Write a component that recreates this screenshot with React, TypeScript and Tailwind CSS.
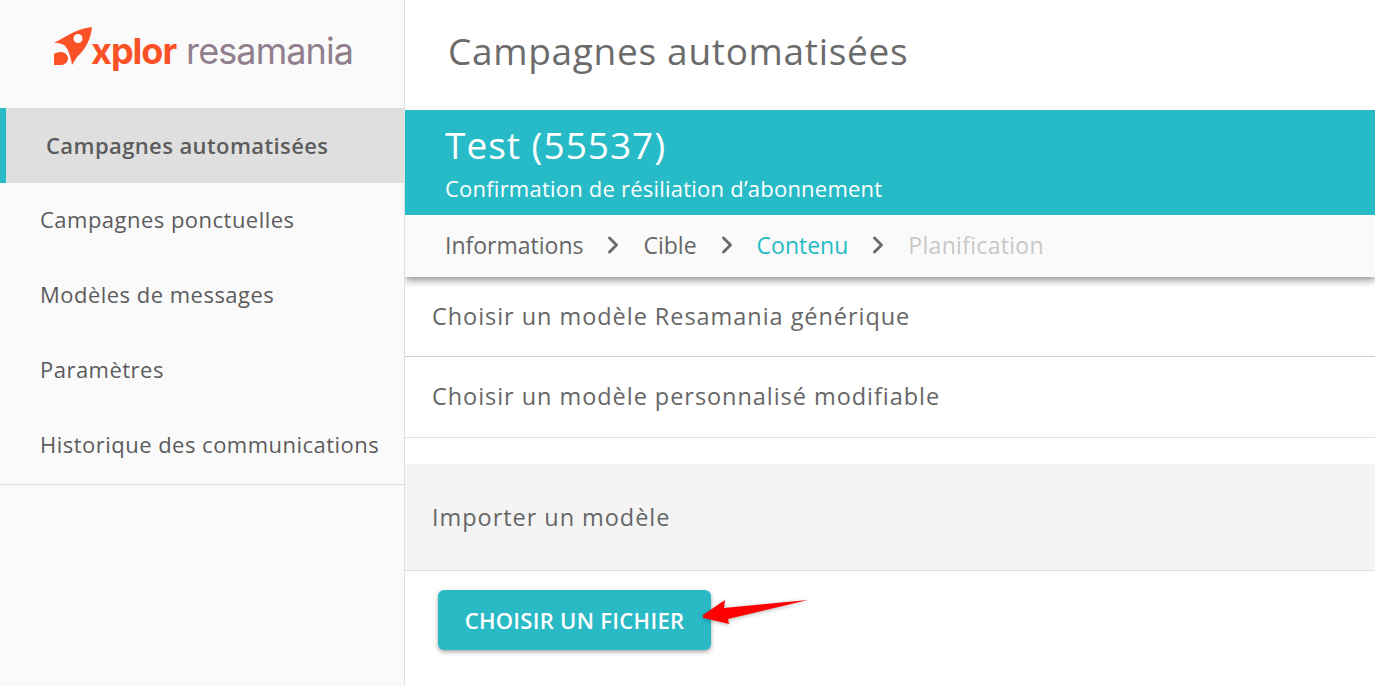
import React from 'react';
import { ChevronRight } from 'lucide-react';

const font = { fontFamily: '"Open Sans", "Noto Sans", sans-serif' };

const navItems = ['Campagnes ponctuelles', 'Modèles de messages', 'Paramètres', 'Historique des communications'];

const Logo = () => (
    <div className="h-[108px] flex items-start pl-[54px] pt-[27px]">
        <svg width="38" height="38" viewBox="0 0 38 38" className="shrink-0">
            <path fill="#fa5127" d="M38 0 C30 1 24 3 18 6 L0 16 C5 16 9 17 10 18 C14 21 17 30 18 38 L23 30 C32 22 37 11 38 0 Z" />
            <circle cx="24" cy="11.500" r="4.500" fill="#fafafa" />
            <path fill="#fa5127" d="M0 27 C1 26 4 25 7 25 C11 25 14 28 14 31.500 C14 35 11 38 7 38 H0 Z" />
        </svg>
        <div className="mt-[4px] -ml-[1px] flex items-baseline h-[40px] text-[36px] leading-[40px] tracking-[-0.9px]" style={{ fontFamily: 'Inter, sans-serif' }}>
            <span className="font-bold text-[#fa5127] tracking-[-1px]">xplor</span>
            <span className="ml-[10px] font-normal text-[#917f8e]">resamania</span>
        </div>
    </div>
);

const App = () => {
    return (
        <div className="flex h-[686px] w-[1375px] overflow-hidden bg-white text-[#666]" style={font}>
            <aside className="w-[405px] shrink-0 bg-[#fafafa] border-r border-[#e0e0e0]">
                <Logo />
                <div className="h-[75px] flex items-center bg-[#dfdfdf] border-l-[6px] border-[#26bbc6] pl-[40px] pb-[1px] text-[22px] font-semibold text-[#5c5c5c] tracking-[0.4px]">
                    Campagnes automatisées
                </div>
                <nav className="border-b border-[#dcdcdc] h-[302px]">
                    {navItems.map(item => (
                        <div key={item} className="h-[75px] flex items-center pl-[40px] pb-[2px] text-[22px] text-[#5c5c5c] tracking-[0.48px]">
                            {item}
                        </div>
                    ))}
                </nav>
            </aside>
            <main className="flex-1 min-w-0 overflow-hidden">
                <h1 className="h-[110px] flex items-center pl-[43px] pb-[8px] text-[37px] font-normal text-[#6b6b6b] tracking-[0.7px]">
                    Campagnes automatisées
                </h1>
                <div className="relative z-10 h-[105px] bg-[#26bbc6] text-white pl-[40px] pt-[11px]">
                    <div className="text-[37px] leading-[48px] tracking-[1px]">Test (55537)</div>
                    <div className="text-[22px] leading-[30px] mt-[4px] tracking-[0.22px]">Confirmation de résiliation d’abonnement</div>
                </div>
                <div className="relative h-[62px] bg-[#fafafa] flex items-center pl-[40px] pb-[2px] text-[23px] shadow-[0_3px_8px_rgba(0,0,0,0.45)]">
                    <span>Informations</span>
                    <ChevronRight size={28} strokeWidth={2.500} className="mx-[16px] text-[#6b6b6b]" />
                    <span>Cible</span>
                    <ChevronRight size={28} strokeWidth={2.500} className="mx-[16px] text-[#6b6b6b]" />
                    <span className="text-[#26bbc6]">Contenu</span>
                    <ChevronRight size={28} strokeWidth={2.500} className="mx-[16px] text-[#6b6b6b]" />
                    <span className="text-[#c8c8c8] tracking-[0.3px]">Planification</span>
                </div>
                <div className="h-[80px] flex items-center pl-[27px] pt-[1px] text-[23.500px] tracking-[0.95px] border-b border-[#cfcfcf]">
                    Choisir un modèle Resamania générique
                </div>
                <div className="h-[81px] flex items-center pl-[27px] text-[23.500px] tracking-[0.95px] border-b border-[#e0e0e0]">
                    Choisir un modèle personnalisé modifiable
                </div>
                <div className="mt-[26px] h-[107px] flex items-center pl-[27px] pt-[1px] bg-[#f4f4f4] text-[23.500px] tracking-[0.95px] border-b border-[#e0e0e0]">
                    Importer un modèle
                </div>
                <div className="relative pl-[33px] pt-[19px]">
                    <button className="h-[60px] w-[273px] rounded-[6px] bg-[#29bac6] text-white text-[22px] font-semibold tracking-[0.3px] shadow-[0_2px_4px_rgba(0,0,0,0.35)]">
                        CHOISIR UN FICHIER
                    </button>
                    <svg width="110" height="34" viewBox="0 0 110 34" className="absolute left-[298px] top-[27px] drop-shadow-[0_1px_2px_rgba(0,0,0,0.3)]">
                        <path fill="#ff0000" d="M-3 19 L22 2 L21 10 L105 2 L25 21 L26 26 Z" />
                    </svg>
                </div>
            </main>
        </div>
    );
};

export default App;
